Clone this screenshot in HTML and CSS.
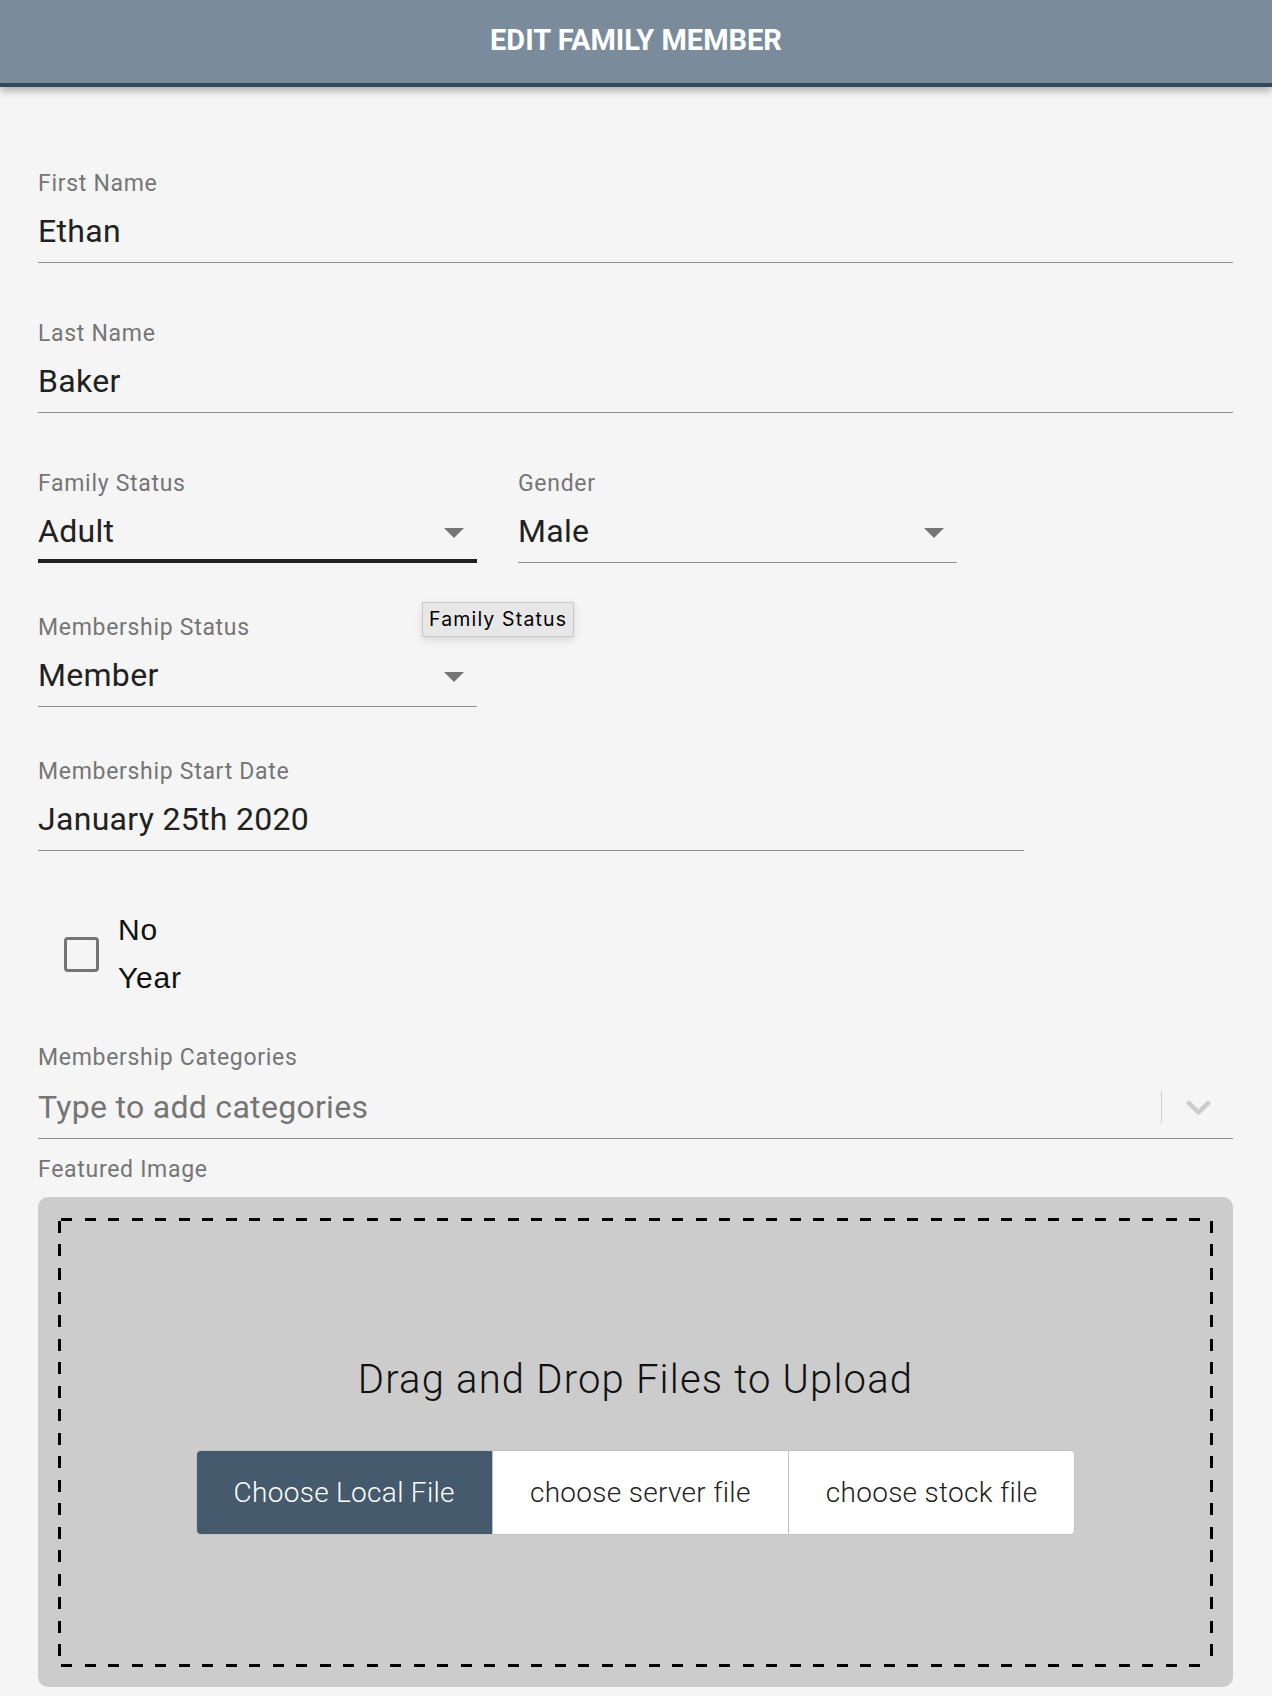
FILE: index.html
```html
<!DOCTYPE html>
<html lang="en">
<head>
<meta charset="utf-8">
<title>Edit Family Member</title>
<link rel="stylesheet" href="styles.css">
</head>
<body>
<header class="topbar">
  <h1 class="topbar-title">EDIT FAMILY MEMBER</h1>
</header>
<main class="form">
  <div class="field field-full">
    <div class="label">First Name</div>
    <div class="value">Ethan</div>
  </div>
  <div class="field field-full gap-150">
    <div class="label">Last Name</div>
    <div class="value">Baker</div>
  </div>
  <div class="row gap-150">
    <div class="field field-half">
      <div class="label">Family Status</div>
      <div class="value value-select value-hover">
        <span>Adult</span>
        <svg class="caret" width="20" height="10" viewBox="0 0 20 10"><path d="M0 0L10 10L20 0Z" fill="#757575"/></svg>
      </div>
    </div>
    <div class="field field-half">
      <div class="label">Gender</div>
      <div class="value value-select">
        <span>Male</span>
        <svg class="caret" width="20" height="10" viewBox="0 0 20 10"><path d="M0 0L10 10L20 0Z" fill="#757575"/></svg>
      </div>
    </div>
  </div>
  <div class="field field-half gap-144">
    <div class="label">Membership Status</div>
    <div class="value value-select">
      <span>Member</span>
      <svg class="caret" width="20" height="10" viewBox="0 0 20 10"><path d="M0 0L10 10L20 0Z" fill="#757575"/></svg>
    </div>
  </div>
  <div class="field field-date gap-144">
    <div class="label">Membership Start Date</div>
    <div class="value">January 25th 2020</div>
  </div>
  <label class="check-row">
    <span class="check-box"></span>
    <span class="check-text">No Year</span>
  </label>
  <div class="field field-full cat-field">
    <div class="label">Membership Categories</div>
    <div class="value value-cat">
      <span class="placeholder">Type to add categories</span>
      <span class="sep"></span>
      <svg class="chev" width="41" height="41" viewBox="0 0 20 20"><path fill="#cccccc" d="M4.516 7.548c0.436-0.446 1.043-0.481 1.576 0l3.908 3.747 3.908-3.747c0.533-0.481 1.141-0.446 1.574 0 0.436 0.445 0.408 1.197 0 1.615-0.406 0.418-4.695 4.502-4.695 4.502-0.217 0.223-0.502 0.335-0.787 0.335s-0.57-0.112-0.789-0.335c0 0-4.287-4.084-4.695-4.502s-0.436-1.170 0-1.615z"/></svg>
    </div>
  </div>
  <div class="label featured-label">Featured Image</div>
  <section class="dropzone">
    <div class="dropzone-inner">
      <div class="drop-title">Drag and Drop Files to Upload</div>
      <div class="btn-group">
        <button class="btn btn-primary">Choose Local File</button>
        <button class="btn">choose server file</button>
        <button class="btn">choose stock file</button>
      </div>
    </div>
  </section>
</main>
<div class="tooltip">Family Status</div>
</body>
</html>
```
FILE: styles.css
```css
html, body {
  margin: 0;
  padding: 0;
}
body {
  position: relative;
  background: #f5f5f5;
  font-family: Roboto, "Liberation Sans", sans-serif;
  width: 1272px;
  height: 1696px;
  overflow: hidden;
}
.topbar {
  background: #7a8c9b;
  border-bottom: 4px solid #34485a;
  height: 83px;
  box-shadow: 0 3px 9px rgba(0, 0, 0, 0.35);
  box-sizing: content-box;
  position: relative;
  z-index: 1;
}
.topbar-title {
  margin: 0;
  padding-top: 23px;
  text-align: center;
  color: #ffffff;
  font-family: Roboto, sans-serif;
  font-weight: 700;
  font-size: 29px;
  line-height: 34px;
}
.form {
  display: flex;
  flex-direction: column;
  padding: 83px 39px 0 38px;
}
.field {
  display: flex;
  flex-direction: column;
}
.field-full { width: 1195px; }
.field-half { width: 439px; }
.field-date { width: 986px; }
.gap-150 { margin-top: 57px; }
.gap-144 { margin-top: 51px; }
.row {
  display: flex;
  gap: 41px;
}
.label {
  font-size: 23px;
  line-height: 26px;
  padding-top: 1px;
  color: #757575;
  letter-spacing: 0.7px;
}
.value {
  font-size: 32px;
  line-height: 40px;
  color: #212121;
  margin-top: 14px;
  padding-bottom: 11px;
  border-bottom: 1px solid #8e8e8e;
  letter-spacing: 0.3px;
}
.value-select {
  display: flex;
  align-items: center;
  justify-content: space-between;
}
.value-hover {
  padding-bottom: 8px;
  border-bottom: 4px solid #212121;
}
.caret {
  margin-right: 13px;
  margin-top: 4px;
}
.check-row {
  display: flex;
  align-items: center;
  margin-top: 55px;
  padding-left: 26px;
  gap: 19px;
}
.check-box {
  width: 29px;
  height: 29px;
  border: 3px solid #757575;
  border-radius: 4px;
}
.check-text {
  width: 80px;
  font-family: "Liberation Sans", Arial, sans-serif;
  font-size: 30px;
  line-height: 48px;
  color: #111111;
  letter-spacing: 0.8px;
}
.cat-field {
  margin-top: 42px;
}
.value-cat {
  display: flex;
  align-items: center;
  margin-top: 15px;
  padding-bottom: 11px;
}
.placeholder {
  flex: 1;
  color: #757575;
}
.sep {
  width: 1px;
  height: 32px;
  background: #cccccc;
}
.chev {
  margin-left: 16px;
  margin-right: 14px;
}
.featured-label {
  margin-top: 17px;
}
.dropzone {
  margin-top: 14px;
  width: 1195px;
  height: 490px;
  box-sizing: border-box;
  background: #cccccc;
  border-radius: 10px;
  padding: 21px 20px 20px 20px;
}
.dropzone-inner {
  height: 100%;
  box-sizing: border-box;
  background-image:
    repeating-linear-gradient(90deg, #000 0 11px, transparent 11px 23.5px),
    repeating-linear-gradient(90deg, #000 0 11px, transparent 11px 23.5px),
    repeating-linear-gradient(180deg, #000 0 12px, transparent 12px 23.5px),
    repeating-linear-gradient(180deg, #000 0 12px, transparent 12px 23.5px);
  background-size: 100% 3px, 100% 3px, 3px 100%, 3px 100%;
  background-position: 3px 0, 3px 100%, 0 3px, 100% 3px;
  background-repeat: no-repeat;
  display: flex;
  flex-direction: column;
  align-items: center;
  justify-content: center;
  padding-top: 8px;
}
.drop-title {
  font-size: 40px;
  line-height: 44px;
  font-weight: 300;
  color: #111111;
  letter-spacing: 1.2px;
}
.btn-group {
  display: flex;
  margin-top: 48px;
  border-radius: 5px;
  overflow: hidden;
  border: 1px solid #c2c2c2;
}
.btn {
  height: 83px;
  border: 0;
  border-left: 1px solid #c2c2c2;
  background: #ffffff;
  font-family: Roboto, sans-serif;
  font-weight: 300;
  font-size: 28px;
  color: #222222;
  padding: 0 37px;
  letter-spacing: 0.3px;
}
.btn-primary {
  background: #465a6d;
  color: #ffffff;
  border-left: 0;
}
.tooltip {
  position: absolute;
  left: 422px;
  top: 602px;
  width: 152px;
  height: 35px;
  box-sizing: border-box;
  background: #e7e7e8;
  border: 1px solid #c9c9c9;
  box-shadow: 0 3px 8px rgba(0, 0, 0, 0.12);
  font-family: Inter, "Liberation Sans", sans-serif;
  font-size: 19.5px;
  line-height: 33px;
  padding-left: 6px;
  letter-spacing: 1.15px;
  color: #000000;
}
```
